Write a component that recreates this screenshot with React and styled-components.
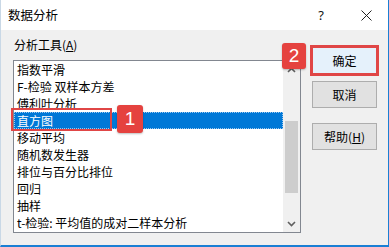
import React from "react";
import styled, { createGlobalStyle } from "styled-components";

const GlobalStyle = createGlobalStyle`
    html, body {
        margin: 0;
        padding: 0;
        background: #ffffff;
    }
    body {
        font-family: "Microsoft YaHei UI", "Noto Sans CJK SC", "Noto Sans", sans-serif;
        font-size: 12px;
        color: #000000;
    }
`;

const Window = styled.div`
    position: relative;
    display: flex;
    flex-direction: column;
    width: 389px;
    height: 247px;
    box-sizing: border-box;
    border-right: 1px solid #1a7fd4;
    border-bottom: 2px solid #1a7fd4;
    border-left: 1px solid #c9d8e6;
    background: #f0f0f0;
    overflow: hidden;
`;

const TitleBar = styled.div`
    display: flex;
    align-items: center;
    height: 30px;
    padding-left: 7px;
    background: #ffffff;
`;

const Title = styled.span`
    flex: 1;
    font-size: 12.5px;
    line-height: 30px;
`;

const TitleButton = styled.div`
    display: flex;
    align-items: center;
    justify-content: center;
    width: ${p => p.$w}px;
    height: 30px;
    font-family: "Segoe UI", "Noto Sans", sans-serif;
    font-size: 13px;
    color: #111;
`;

const Body = styled.div`
    display: flex;
    flex: 1;
    padding: 6px 0 0 12px;
    gap: 11px;
`;

const LeftPane = styled.div`
    display: flex;
    flex-direction: column;
`;

const Label = styled.div`
    height: 17px;
    line-height: 17px;
    margin-bottom: 7px;
    padding-left: 1px;
`;

const ListBox = styled.div`
    display: flex;
    width: 288px;
    height: 173px;
    box-sizing: border-box;
    border: 1px solid #828790;
    background: #ffffff;
`;

const Items = styled.div`
    flex: 1;
    display: flex;
    flex-direction: column;
`;

const Item = styled.div`
    height: 17px;
    line-height: 17px;
    padding-left: 3px;
    white-space: nowrap;
    box-sizing: border-box;
    background: ${p => (p.$selected ? "#0078d7" : "transparent")};
    color: ${p => (p.$selected ? "#ffffff" : "#000000")};
    outline: ${p => (p.$selected ? "1px dotted #9cc8f0" : "none")};
    outline-offset: -1px;
`;

const ScrollBar = styled.div`
    display: flex;
    flex-direction: column;
    width: 17px;
    background: #f0f0f0;
`;

const ArrowCell = styled.div`
    display: flex;
    align-items: center;
    justify-content: center;
    height: 17px;
`;

const Track = styled.div`
    flex: 1;
    display: flex;
    flex-direction: column;
    padding: 0 2px;
`;

const Thumb = styled.div`
    margin-top: ${p => p.$top}px;
    height: ${p => p.$height}px;
    background: #cdcdcd;
`;

const ButtonColumn = styled.div`
    display: flex;
    flex-direction: column;
    padding-top: 11px;
`;

const Button = styled.div`
    display: flex;
    align-items: center;
    justify-content: center;
    width: 65px;
    height: 27px;
    box-sizing: border-box;
    margin-bottom: ${p => p.$gap}px;
    border: 1px solid ${p => (p.$default ? "#0078d7" : "#adadad")};
    background: ${p => (p.$default ? "#e5f1fb" : "#e1e1e1")};
    outline: ${p => (p.$marked ? "3px solid #e04646" : "none")};
    outline-offset: -1px;
`;

const Badge = styled.div`
    position: absolute;
    left: ${p => p.$x}px;
    top: ${p => p.$y}px;
    display: flex;
    align-items: center;
    justify-content: center;
    width: ${p => p.$w}px;
    height: ${p => p.$h}px;
    border-radius: 3px;
    background: #e5423f;
    color: #ffffff;
    font-family: "Liberation Sans", Arial, sans-serif;
    font-size: 19px;
    box-shadow: 0 1px 2px rgba(0, 0, 0, 0.25);
`;

const Marker = styled.div`
    position: absolute;
    left: 10px;
    top: 108px;
    width: 101px;
    height: 23px;
    box-sizing: border-box;
    border: 2px solid #e04646;
`;

const tools = [
    "指数平滑",
    "F-检验 双样本方差",
    "傅利叶分析",
    "直方图",
    "移动平均",
    "随机数发生器",
    "排位与百分比排位",
    "回归",
    "抽样",
    "t-检验: 平均值的成对二样本分析",
];

function Chevron({ down }) {
    return (
        <svg width="9" height="6" viewBox="0 0 9 6">
            <path
                d={down ? "M1 1 L4.5 4.5 L8 1" : "M1 5 L4.5 1.5 L8 5"}
                fill="none"
                stroke="#606060"
                strokeWidth="1.6"
            />
        </svg>
    );
}

export default function App() {
    return (
        <>
            <GlobalStyle />
            <Window>
                <TitleBar>
                    <Title>数据分析</Title>
                    <TitleButton $w={46}>?</TitleButton>
                    <TitleButton $w={44}>
                        <svg width="11" height="11" viewBox="0 0 11 11">
                            <path d="M0.5 0.5 L10.5 10.5 M10.5 0.5 L0.5 10.5" stroke="#222" strokeWidth="1" />
                        </svg>
                    </TitleButton>
                </TitleBar>
                <Body>
                    <LeftPane>
                        <Label>
                            分析工具(<u>A</u>)
                        </Label>
                        <ListBox>
                            <Items>
                                {tools.map((t, i) => (
                                    <Item key={t} $selected={i === 3}>
                                        {t}
                                    </Item>
                                ))}
                            </Items>
                            <ScrollBar>
                                <ArrowCell>
                                    <Chevron />
                                </ArrowCell>
                                <Track>
                                    <Thumb $top={43} $height={72} />
                                </Track>
                                <ArrowCell>
                                    <Chevron down />
                                </ArrowCell>
                            </ScrollBar>
                        </ListBox>
                    </LeftPane>
                    <ButtonColumn>
                        <Button $default $marked $gap={7}>确定</Button>
                        <Button $gap={15}>取消</Button>
                        <Button>
                            帮助(<u>H</u>)
                        </Button>
                    </ButtonColumn>
                </Body>
                <Marker />
                <Badge $x={116} $y={105} $w={26} $h={28}>1</Badge>
                <Badge $x={281} $y={43} $w={24} $h={26}>2</Badge>
            </Window>
        </>
    );
}
